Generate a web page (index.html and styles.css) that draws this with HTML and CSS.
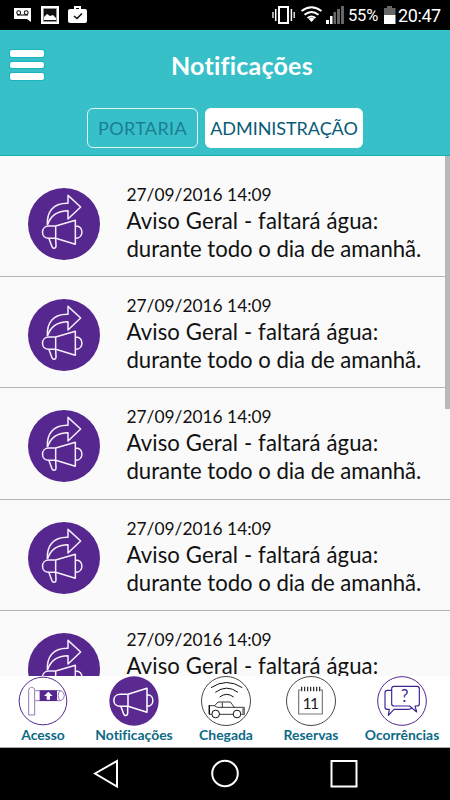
FILE: index.html
```html
<!DOCTYPE html>
<html lang="pt-BR">
<head>
<meta charset="utf-8">
<title>Notificações</title>
<link rel="stylesheet" href="styles.css">
</head>
<body>
<svg class="defs" aria-hidden="true">
  <symbol id="alert" viewBox="24 24 216 216">
    <circle cx="132" cy="132" r="108" fill="#56278f"/>
    <g fill="none" stroke="#f6effb" stroke-width="4.500" stroke-linejoin="round">
      <path d="M82 136C80 96 98 69 144 70V46L182 81L144 117V92C109 92 91 107 82 136"/>
      <path d="M107 138L166 121V193L107 175ZM107 138H87C61 138 61 175 87 175H107M167 138C192 137 192 175 167 175"/>
      <path d="M87 176L96 200C99 208 109 205 108 197L107 176"/>
    </g>
  </symbol>
</svg>
<div class="screen">
  <div class="status">
    <svg class="status-left" width="90" height="30" viewBox="0 0 90 30">
      <path d="M14 8h17v14l-4-3H14z" fill="#fff"/>
      <g fill="none" stroke="#111" stroke-width="1.1"><circle cx="18.700" cy="12.700" r="1.900"/><circle cx="26.200" cy="12.700" r="1.900"/><path d="M17 15h11"/></g>
      <path d="M41 6h18v18H41z" fill="#fff"/><path d="M43.500 8.500h13v13h-13z" fill="#111" stroke="#999" stroke-width=".7"/><path d="M44 20v-3l3-3 3 2 3-1 3 3v2z" fill="#fff"/>
      <rect x="68" y="9" width="19" height="14" rx="2" fill="#fff"/><path d="M75 10V7h5v3" fill="none" stroke="#fff" stroke-width="2"/><path d="M74 16l3 2.500 5-5" fill="none" stroke="#111" stroke-width="1.600"/>
    </svg>
    <div class="status-right">
      <svg width="76" height="30" viewBox="270 0 76 30">
        <g fill="none" stroke="#fff"><rect x="279" y="7" width="9" height="16" stroke-width="2"/><path d="M275.700 9v12M291.400 9v12" stroke-width="1.500"/><path d="M273 12v6M294.200 12v6" stroke-width="1.300"/>
        <path d="M301.500 11q10-7.500 20 0M304.500 14.700q7-5.500 14 0M307.500 18q4-3 8 0" stroke-width="2"/></g>
        <path d="M308.500 18.800q3-2 6 0l-3 3.200z" fill="#fff"/>
        <path d="M326 20h3v4h-3zM330 16h2.500v8H330z" fill="#fff"/><path d="M333.500 12h2.500v12h-2.500zM337 9h3v15h-3zM341 6h3v18h-3z" fill="#666"/>
      </svg>
      <span class="percent">55%</span>
      <svg class="battery" width="12" height="30" viewBox="384 0 12 30"><path d="M387 6h5v2h3.500v7H384V8h3z" fill="#666"/><path d="M384 15h11.500v9H384z" fill="#fff"/></svg>
      <span class="clock">20:47</span>
    </div>
  </div>
  <header>
    <div class="title-row">
      <div class="menu"><i></i><i></i><i></i></div>
      <h1>Notificações</h1>
    </div>
    <div class="tabs">
      <div class="tab off"><span>PORTARIA</span></div>
      <div class="tab on"><span>ADMINISTRAÇÃO</span></div>
    </div>
  </header>
  <main>
    <div class="list">
      <article><svg class="icon"><use href="#alert"/></svg><div class="text"><time>27/09/2016 14:09</time><p>Aviso Geral - faltará água:</p><p class="second">durante todo o dia de amanhã.</p></div></article>
      <article><svg class="icon"><use href="#alert"/></svg><div class="text"><time>27/09/2016 14:09</time><p>Aviso Geral - faltará água:</p><p class="second">durante todo o dia de amanhã.</p></div></article>
      <article><svg class="icon"><use href="#alert"/></svg><div class="text"><time>27/09/2016 14:09</time><p>Aviso Geral - faltará água:</p><p class="second">durante todo o dia de amanhã.</p></div></article>
      <article><svg class="icon"><use href="#alert"/></svg><div class="text"><time>27/09/2016 14:09</time><p>Aviso Geral - faltará água:</p><p class="second">durante todo o dia de amanhã.</p></div></article>
      <article><svg class="icon"><use href="#alert"/></svg><div class="text"><time>27/09/2016 14:09</time><p>Aviso Geral - faltará água:</p></div></article>
    </div>
    <div class="scrollbar"></div>
  </main>
  <nav>
    <div class="item">
      <svg width="50" height="50" viewBox="52 19 150 150">
        <circle cx="127" cy="94" r="71.500" fill="#fff" stroke="#56278f" stroke-width="3"/>
        <g fill="none" stroke="#7d5ca5" stroke-width="2.500"><path d="M84 136V62C84 50 102 50 102 62V136ZM104 63H180Q191 67 191 78T180 93H104M180 63C170 68 170 88 180 93"/></g>
        <path d="M117 62h52v32h-52z" fill="#56278f"/><path d="M143 66l13 13h-8v11h-10V79h-8z" fill="#fff"/>
      </svg>
      <span>Acesso</span>
    </div>
    <div class="item">
      <svg width="50" height="50" viewBox="56 18 150 150">
        <circle cx="131" cy="93" r="74" fill="#5b2a91"/>
        <g fill="none" stroke="#fff" stroke-width="4.500" stroke-linejoin="round"><path d="M113 73L170 55V127L113 109ZM113 73H90C64 73 64 109 90 109H113M171 74C193 74 193 109 171 109"/><path d="M92 110L100 132C103 140 113 137 112 129V110"/></g>
      </svg>
      <span>Notificações</span>
    </div>
    <div class="item">
      <svg width="50" height="50" viewBox="63 18 150 150">
        <circle cx="138" cy="93" r="73.500" fill="#fff" stroke="#222" stroke-width="2.500"/>
        <g fill="none" stroke="#111" stroke-width="3"><path d="M93 53Q140 22 187 53M106 67Q140 42 174 67M119 81Q140 65 161 81"/>
        <path d="M95 133H88V107H104L114 96H151L163 112H193V133H184M159 133H119M104 108L113 112H164M127 97V112" stroke-width="2.500"/><circle cx="107" cy="132" r="11.500"/><circle cx="171" cy="132" r="11.500"/></g>
        <path d="M187 112h8v22h-8z" fill="#777"/><path d="M88 105v28" stroke="#111" stroke-width="4"/>
      </svg>
      <span>Chegada</span>
    </div>
    <div class="item">
      <svg width="50" height="50" viewBox="48 18 150 150">
        <circle cx="123" cy="93" r="73.500" fill="#fff" stroke="#222" stroke-width="2.500"/>
        <path d="M92 60H86V132H157V60H151" fill="none" stroke="#777" stroke-width="3.500"/>
        <path d="M95 50v14M104 50v14M113 50v14M122 50v14M131 50v14M140 50v14M149 50v14" stroke="#222" stroke-width="3.500"/>
        <text x="120" y="117" class="day">11</text>
      </svg>
      <span>Reservas</span>
    </div>
    <div class="item">
      <svg width="50" height="50" viewBox="67 18 150 150">
        <circle cx="142" cy="93" r="73" fill="#fff" stroke="#56278f" stroke-width="3"/>
        <g fill="none" stroke="#3d2494" stroke-width="3.500" stroke-linejoin="round"><path d="M118 49H187Q194 49 194 56V101Q194 108 187 108H181L186 126L165 108H118Q111 108 111 101V56Q111 49 118 49ZM111 61H98Q91 61 91 68V112Q91 118 98 118H104L101 136L118 118H160Q169 118 171 114"/></g>
        <text x="150" y="97" class="question">?</text>
      </svg>
      <span>Ocorrências</span>
    </div>
  </nav>
  <footer>
    <svg width="450" height="52" viewBox="0 748 450 52"><g fill="none" stroke="#fff" stroke-width="2"><path d="M95 773.500L117 761V786.500Z"/><circle cx="225" cy="773.500" r="12.800"/><path d="M331.500 761h25v25.500h-25z"/></g></svg>
  </footer>
</div>
</body>
</html>
```

FILE: styles.css
```css
* { box-sizing: border-box; }
body { margin: 0; font-family: Lato, sans-serif; font-variant-ligatures: none; }
svg { display: block; flex: none; }
.defs { position: absolute; width: 0; height: 0; }
.screen { width: 450px; height: 800px; display: flex; flex-direction: column; overflow: hidden; background: #000; }
.status { height: 30px; flex: none; display: flex; justify-content: space-between; background: #000; color: #fff; font-family: Roboto, sans-serif; }
.status-right { display: flex; width: 180px; line-height: 32px; white-space: nowrap; }
.percent { width: 38px; padding-left: 2px; font-size: 16.500px; letter-spacing: -.2px; }
.clock { padding-left: 2px; font-size: 18px; letter-spacing: -.4px; }
header { height: 126px; flex: none; background: #38c0c9; border-bottom: 1px solid #12b4bf; }
.title-row { height: 78px; display: flex; padding: 20px 0 0 10px; }
.menu { width: 34px; display: flex; flex-direction: column; gap: 5px; }
.menu i { height: 6.500px; flex: none; border-radius: 2px; background: #fff; box-shadow: 0 0 0 1px #16b5c1; }
h1 { margin: -1px 0 0 127px; font-size: 25px; line-height: 32px; font-weight: 700; color: #fff; letter-spacing: .22px; }
.tabs { display: flex; gap: 7px; padding-left: 87px; }
.tab { height: 40px; display: flex; justify-content: center; align-items: center; border-radius: 6px; font-size: 18px; white-space: nowrap; }
.off { width: 111px; border: 1.500px solid #e0f7f8; color: #1a7e93; letter-spacing: .35px; }
.on { width: 158px; background: #fff; color: #075b77; letter-spacing: -.05px; }
main { height: 520px; flex: none; display: flex; overflow: hidden; background: #fafafa; }
.list { width: 445px; padding-top: 10px; }
article { width: 450px; height: 111.200px; display: flex; padding: 22px 0 0 28px; border-bottom: 1px solid #b3b3b3; }
.icon { width: 72px; height: 72px; }
.text { margin-left: 26.500px; color: #111; white-space: nowrap; }
time { display: block; margin-top: -3px; font-size: 17.350px; line-height: 20px; }
p { margin: 0; font-size: 22.150px; line-height: 28px; padding-top: 2px; letter-spacing: .11px; }
.second { padding-top: 0; letter-spacing: -.03px; }
.scrollbar { width: 5px; height: 253px; background: #b8b8b8; z-index: 1; }
nav { height: 72px; flex: none; display: grid; grid-template-columns: 86px 96px 88px 82px 100px; background: #fff; border-bottom: 1px solid #aaa; }
.item { display: flex; flex-direction: column; align-items: center; color: #0c6a86; font-size: 13.900px; font-weight: 700; line-height: 18px; }
.item span { white-space: nowrap; }
.day { font: 47px Lato, sans-serif; text-anchor: middle; fill: #222; letter-spacing: -5px; }
.question { font: 50px Lato, sans-serif; text-anchor: middle; fill: #3d2494; }
footer { height: 52px; flex: none; background: #000; }
```
